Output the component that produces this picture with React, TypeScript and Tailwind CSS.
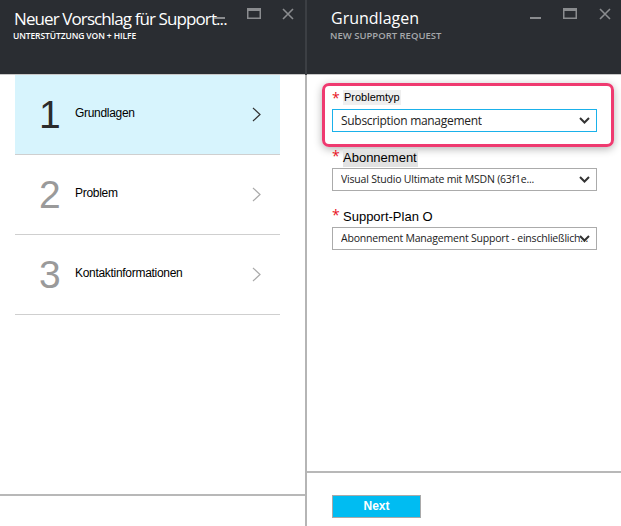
import React from "react";

const sans = { fontFamily: '"Open Sans", "Noto Sans", sans-serif' };
const arial = { fontFamily: '"Liberation Sans", Arial, sans-serif' };

const Minimize = () => (
  <svg width="12" height="4" viewBox="0 0 12 4">
    <rect x="0" y="1" width="11" height="2" fill="#8a8c8f" />
  </svg>
);

const Maximize = () => (
  <svg width="14" height="11" viewBox="0 0 14 11">
    <rect x="0.75" y="0.75" width="12.5" height="9.5" fill="none" stroke="#8a8c8f" strokeWidth="1.5" />
    <rect x="0" y="0" width="14" height="3" fill="#8a8c8f" />
  </svg>
);

const Close = () => (
  <svg width="12" height="12" viewBox="0 0 12 12">
    <path d="M1 1 L11 11 M11 1 L1 11" stroke="#8a8c8f" strokeWidth="1.6" />
  </svg>
);

const Chevron = ({ color }: { color: string }) => (
  <svg width="9" height="15" viewBox="0 0 9 15">
    <path d="M1 1 L8 7.5 L1 14" fill="none" stroke={color} strokeWidth="1.2" />
  </svg>
);

const DropArrow = () => (
  <svg width="11" height="7" viewBox="0 0 11 7">
    <path d="M1 1 L5.5 5.5 L10 1" fill="none" stroke="#333" strokeWidth="2" />
  </svg>
);

const steps = [
  { n: "1", label: "Grundlagen", active: true },
  { n: "2", label: "Problem", active: false },
  { n: "3", label: "Kontaktinformationen", active: false },
];

const Field = ({
  label,
  value,
  labelClass,
  boxClass,
  textClass,
  arrowOverlap,
}: {
  label: string;
  value: string;
  labelClass: string;
  boxClass: string;
  textClass: string;
  arrowOverlap?: boolean;
}) => (
  <div>
    <div className="flex items-start">
      <span className="text-[#e81123] text-[14px] leading-[14px] w-[11px]">*</span>
      <span className={labelClass} style={arial}>
        {label}
      </span>
    </div>
    <div className={`flex items-center justify-between w-[265px] h-[23px] pl-[8px] pr-[6px] bg-white ${boxClass}`}>
      <span className={`whitespace-nowrap overflow-hidden ${textClass}`}>{value}</span>
      <span className={arrowOverlap ? "-ml-[12px]" : ""}>
        <DropArrow />
      </span>
    </div>
  </div>
);

export default function App() {
  return (
    <div className="flex w-[621px] h-[526px] bg-white overflow-hidden" style={sans}>
      {/* linkes Blade */}
      <div className="flex flex-col w-[305px] h-full">
        <div className="relative h-[75px] bg-[#2a2d32] border-b border-[#c8c8c8] shrink-0">
          <div className="pl-[14px] pt-[7px] text-white text-[17px] leading-[24px] tracking-[-0.9px] whitespace-nowrap">
            Neuer Vorschlag für Support...
          </div>
          <div className="pl-[13px] text-white text-[8.5px] leading-[10px] font-semibold tracking-[-0.1px]">
            UNTERSTÜTZUNG VON + HILFE
          </div>
          <div className="absolute left-[214px] top-[16px]">
            <Minimize />
          </div>
          <div className="absolute left-[247px] top-[8px]">
            <Maximize />
          </div>
          <div className="absolute left-[282px] top-[8px]">
            <Close />
          </div>
        </div>
        <div className="px-[15px] w-[295px]">
          {steps.map((s) => (
            <div
              key={s.n}
              className={`flex items-center h-[80px] border-b border-[#cfcfcf] ${s.active ? "bg-[#d7f4fd]" : ""}`}
            >
              <span
                className={`w-[36px] ml-[24px] text-[39px] leading-none ${s.active ? "text-[#2b2b2b]" : "text-[#9a9a9a]"}`}
                style={arial}
              >
                {s.n}
              </span>
              <span className="flex-1 text-[12px] text-black -mt-[4px] tracking-[-0.3px]" style={arial}>
                {s.label}
              </span>
              <span className="mr-[19px]">
                <Chevron color={s.active ? "#333" : "#aaa"} />
              </span>
            </div>
          ))}
        </div>
        <div className="flex-1" />
        <div className="h-[32px] border-t-2 border-[#b8b8b8] shrink-0" />
      </div>

      {/* Trennlinie */}
      <div className="flex flex-col w-[2px] h-full shrink-0">
        <div className="h-[75px] bg-[#3c3f44]" />
        <div className="flex-1 bg-[#b5b5b5]" />
      </div>

      {/* rechtes Blade */}
      <div className="flex flex-col flex-1 h-full">
        <div className="relative h-[75px] bg-[#2a2d32] border-b border-[#c8c8c8] shrink-0">
          <div className="pl-[24px] pt-[6px] text-white text-[16px] leading-[24px]">Grundlagen</div>
          <div className="pl-[23px] text-[#a6a8ab] text-[9.5px] leading-[12px] font-semibold">NEW SUPPORT REQUEST</div>
          <div className="absolute left-[223px] top-[16px]">
            <Minimize />
          </div>
          <div className="absolute left-[256px] top-[8px]">
            <Maximize />
          </div>
          <div className="absolute left-[292px] top-[8px]">
            <Close />
          </div>
        </div>

        <div className="flex-1 pt-[8px]">
          <div className="ml-[15px] w-[292px] border-[3px] border-[#ef3a70] rounded-[7px] pl-[7px] pt-[5px] pb-[12px] shadow-[0_2px_8px_rgba(0,0,0,0.3)]">
            <Field
              label="Problemtyp"
              value="Subscription management"
              labelClass="text-[11px] leading-[15px] bg-[#efefef] text-black -mt-[1px] mb-[4px] px-[1px]"
              boxClass="border border-[#1ab1ea]"
              textClass="text-[12px] tracking-[-0.3px] text-[#222]"
            />
          </div>
          <div className="pl-[25px] pt-[2px] flex flex-col gap-[17px]">
            <Field
              label="Abonnement"
              value="Visual Studio Ultimate mit MSDN (63f1e..."
              labelClass="text-[13px] leading-[18px] bg-[#e2e2e2] text-black pr-[1px] mb-[1px]"
              boxClass="border border-[#ababab]"
              textClass="text-[10.5px] tracking-[-0.2px] text-[#222]"
            />
            <Field
              label="Support-Plan O"
              value="Abonnement Management Support - einschließlich..."
              labelClass="text-[13px] leading-[18px] text-black mb-[1px]"
              boxClass="border border-[#ababab]"
              textClass="text-[10.5px] tracking-[-0.2px] text-[#222]"
              arrowOverlap
            />
          </div>
        </div>

        <div className="h-[55px] border-t-2 border-[#b8b8b8] shrink-0 pl-[25px] pt-[19px]">
          <button
            className="w-[89px] h-[23px] bg-[#00bcf2] border border-[#a9a9a9] text-white text-[12px] font-bold"
            style={arial}
          >
            Next
          </button>
        </div>
      </div>
    </div>
  );
}
